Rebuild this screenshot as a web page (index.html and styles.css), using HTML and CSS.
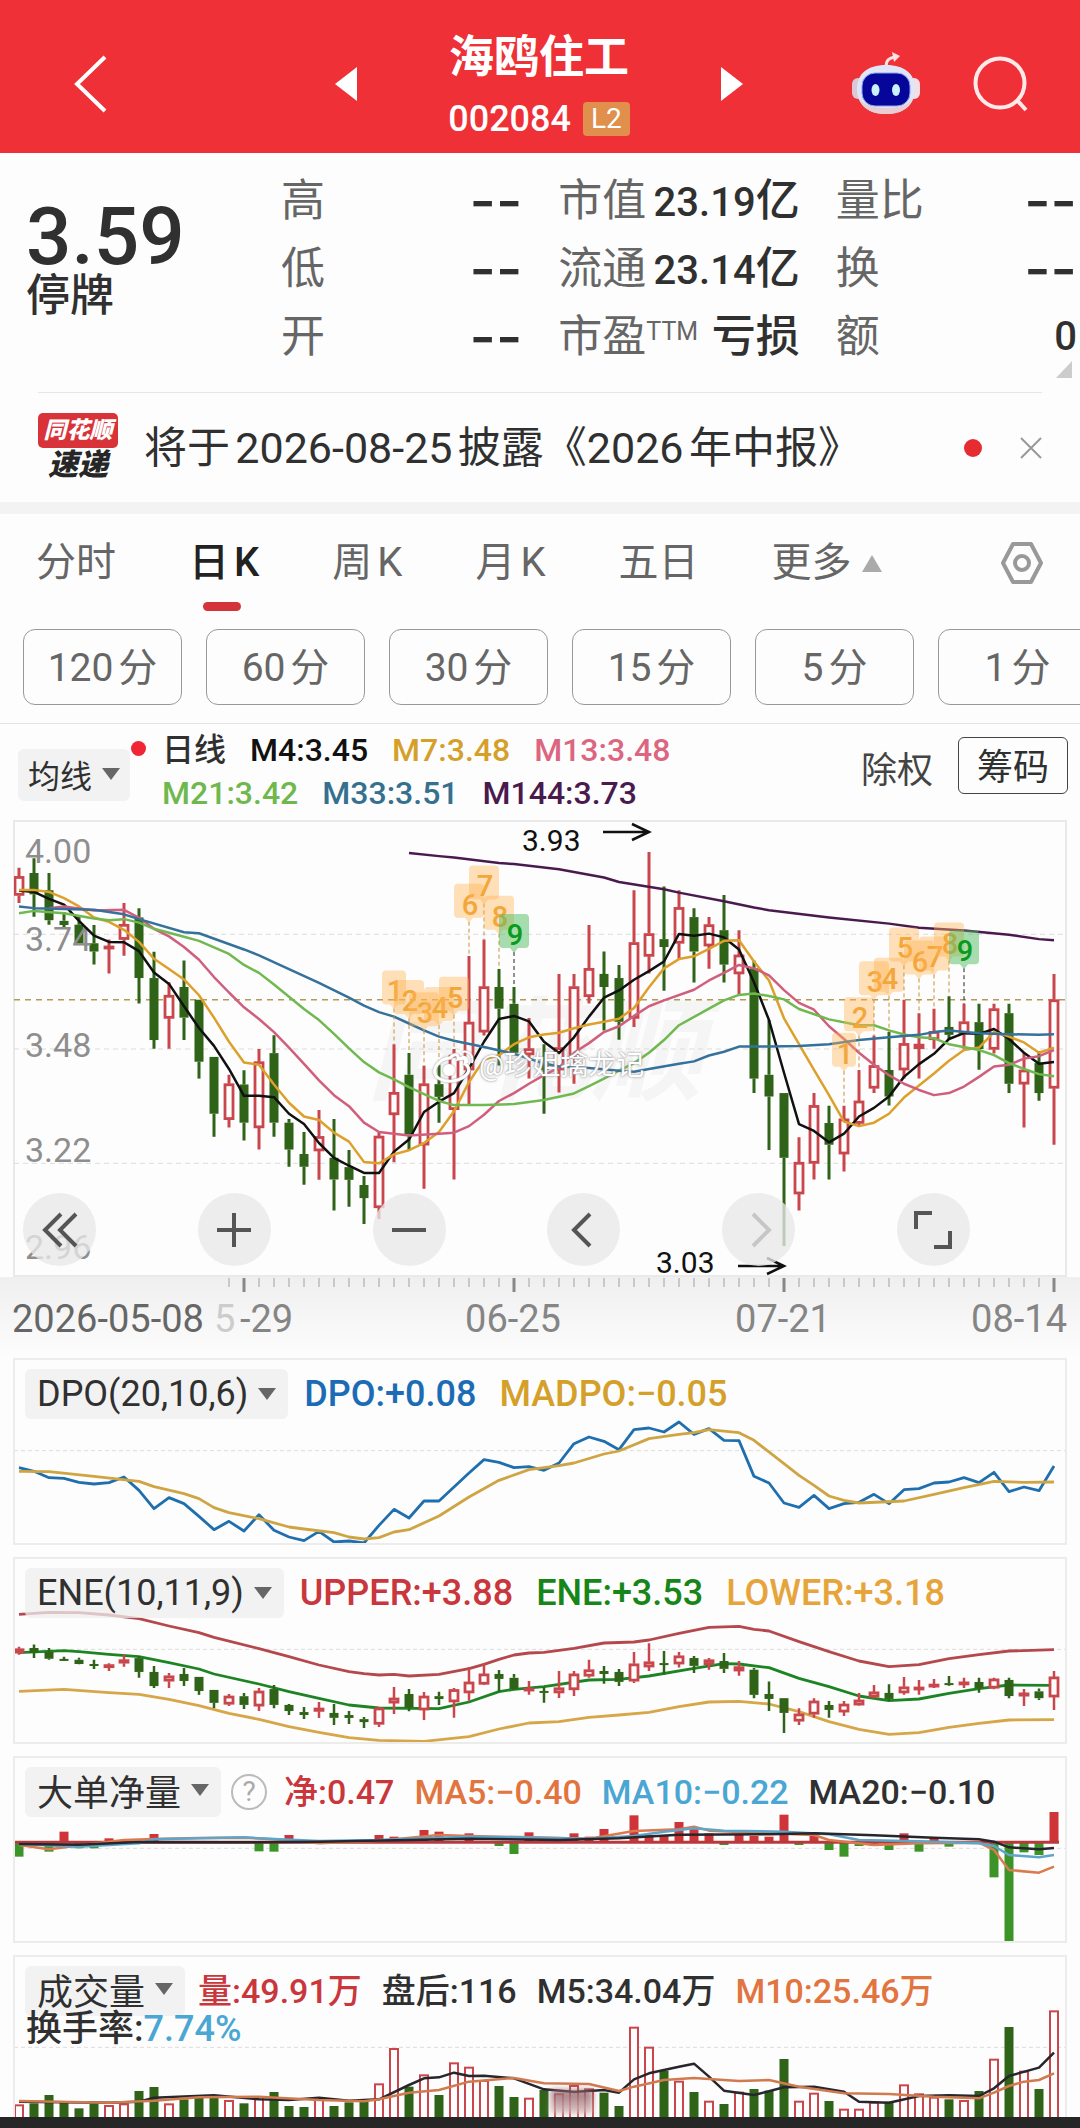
FILE: index.html
```html
<!DOCTYPE html>
<html lang="zh-CN">
<head>
<meta charset="utf-8">
<meta name="viewport" content="width=device-width, initial-scale=1">
<title>海鸥住工 002084</title>
<link rel="stylesheet" href="styles.css">
</head>
<body>
<header class="topbar">
  <div class="topbar-left">
    <button class="icon-btn" aria-label="返回"><svg width="36" height="60" viewBox="0 0 36 60"><path d="M32 3 4 30 32 57" fill="none" stroke="#fff" stroke-width="4"/></svg></button>
  </div>
  <div class="stock">
    <button class="icon-btn" aria-label="上一只"><svg width="22" height="34" viewBox="0 0 22 34"><path d="M22 0v34L0 17z" fill="#fff"/></svg></button>
    <div class="stock-name">
      <h1>海鸥住工</h1>
      <p>002084 <span class="level">L2</span></p>
    </div>
    <button class="icon-btn" aria-label="下一只"><svg width="22" height="34" viewBox="0 0 22 34"><path d="M0 0v34l22-17z" fill="#fff"/></svg></button>
  </div>
  <div class="topbar-right">
    <button class="icon-btn" aria-label="智能助手"><svg width="70" height="64" viewBox="0 0 70 64">
      <path d="M35 15c0-7 3-9 9-10" fill="none" stroke="#ffe3e3" stroke-width="3"/><path d="M41 0l8 4-6 6z" fill="#ffe3e3"/>
      <rect x="1" y="26" width="12" height="21" rx="6" fill="#d9c9d8"/><rect x="57" y="26" width="12" height="21" rx="6" fill="#f3dfe4"/>
      <path d="M35 13c19 0 29 9 29 24S54 62 35 62 6 52 6 37s10-24 29-24z" fill="#dfe6f8"/>
      <path d="M35 56c14 0 22-3 26-9-4 11-13 15-26 15S13 58 9 47c4 6 12 9 26 9z" fill="#e9cdd3"/>
      <rect x="11" y="21" width="48" height="33" rx="13" fill="#06079a" stroke="#8ea0f0" stroke-width="1"/>
      <ellipse cx="24.500" cy="38" rx="4" ry="6" fill="#c9f1ff"/><ellipse cx="45" cy="38" rx="4" ry="6" fill="#c9f1ff"/></svg></button>
    <button class="icon-btn" aria-label="搜索"><svg width="56" height="56" viewBox="0 0 56 56"><circle cx="27" cy="27" r="24.500" fill="none" stroke="#ffe9e9" stroke-width="4"/><path d="M44 44l9 10" stroke="#ffe9e9" stroke-width="4"/></svg></button>
  </div>
</header>

<main>
<section class="quote">
  <div class="price"><strong>3.59</strong><span>停牌</span></div>
  <dl>
    <div><dt>高</dt><dd class="empty">--</dd></div>
    <div><dt>低</dt><dd class="empty">--</dd></div>
    <div><dt>开</dt><dd class="empty">--</dd></div>
  </dl>
  <dl>
    <div><dt>市值</dt><dd>23.19<b>亿</b></dd></div>
    <div><dt>流通</dt><dd>23.14<b>亿</b></dd></div>
    <div><dt>市盈<sup>TTM</sup></dt><dd><b>亏损</b></dd></div>
  </dl>
  <dl>
    <div><dt>量比</dt><dd class="empty">--</dd></div>
    <div><dt>换</dt><dd class="empty">--</dd></div>
    <div><dt>额</dt><dd>0</dd></div>
  </dl>
  <span class="corner"></span>
</section>

<section class="news">
  <div class="news-logo"><span>同花顺</span><em>速递</em></div>
  <a class="news-text" href="#">将于2026-08-25披露《2026年中报》</a>
  <span class="dot"></span>
  <button class="icon-btn" aria-label="关闭"><svg width="22" height="26" viewBox="0 0 22 26"><path d="M1 3l20 20M21 3L1 23" stroke="#999" stroke-width="2"/></svg></button>
</section>

<nav class="tabs">
  <button>分时</button><button class="on">日K</button><button>周K</button><button>月K</button><button>五日</button><button>更多<i class="tri-up"></i></button>
  <button class="settings" aria-label="设置"><svg width="44" height="44" viewBox="0 0 44 44" fill="none" stroke="#999" stroke-width="4"><path d="M13 3h18l10 19-10 19H13L3 22z" stroke-linejoin="round"/><circle cx="22" cy="22" r="7"/></svg></button>
</nav>
<div class="minutes">
  <button>120分</button><button>60分</button><button>30分</button><button>15分</button><button>5分</button><button>1分</button>
</div>

<section class="legend">
  <button class="pick">均线<i class="tri-down"></i></button>
  <div class="legend-values">
    <p><span class="c-ink">日线</span><span class="c-black">M4:3.45</span><span class="c-gold">M7:3.48</span><span class="c-pink">M13:3.48</span></p>
    <p><span class="c-lime">M21:3.42</span><span class="c-steel">M33:3.51</span><span class="c-plum">M144:3.73</span></p>
  </div>
  <button class="plain">除权</button>
  <button class="chips">筹码</button>
</section>

<section class="kline">
  <svg class="plot" id="kline"></svg>
  <p class="credit"><svg width="42" height="34" viewBox="0 0 42 34"><path d="M17 9c3-4 9-5 8 1 6-2 9 0 7 5 5 3 5 8 0 12-6 5-17 7-25 3-6-3-7-9-3-14 3-4 8-7 13-7z" fill="none" stroke="#fff" stroke-width="3"/><circle cx="16" cy="21" r="6" fill="#fff"/><path d="M29 3c7-2 12 4 10 11M29 8c4-1 6 2 5 6" fill="none" stroke="#fff" stroke-width="2"/></svg>@珍姐擒龙记</p>
  <div class="controls">
    <button aria-label="最早"><svg width="36" height="36" viewBox="0 0 36 36"><path d="M19 2 3 18l16 16M34 2 18 18l16 16"/></svg></button>
    <button aria-label="放大"><svg width="36" height="36" viewBox="0 0 36 36"><path d="M1 18h34M18 1v34"/></svg></button>
    <button aria-label="缩小"><svg width="36" height="36" viewBox="0 0 36 36"><path d="M1 18h34"/></svg></button>
    <button aria-label="向左"><svg width="36" height="36" viewBox="0 0 36 36"><path d="M24 2 8 18l16 16"/></svg></button>
    <button aria-label="向右" class="off"><svg width="36" height="36" viewBox="0 0 36 36"><path d="M12 2l16 16-16 16"/></svg></button>
    <button aria-label="全屏"><svg width="38" height="38" viewBox="0 0 38 38"><path d="M2 18V2h16M36 20v16H20"/></svg></button>
  </div>
</section>
<svg class="axis" id="axis"></svg>

<section class="panel">
  <svg class="plot" id="dpo"></svg>
  <div class="panel-head"><button class="pick">DPO(20,10,6)<i class="tri-down"></i></button><span class="c-blue">DPO:+0.08</span><span class="c-gold">MADPO:−0.05</span></div>
</section>
<section class="panel">
  <svg class="plot" id="ene"></svg>
  <div class="panel-head"><button class="pick">ENE(10,11,9)<i class="tri-down"></i></button><span class="c-red">UPPER:+3.88</span><span class="c-green">ENE:+3.53</span><span class="c-amber">LOWER:+3.18</span></div>
</section>
<section class="panel">
  <svg class="plot" id="net"></svg>
  <div class="panel-head dense"><button class="pick">大单净量<i class="tri-down"></i></button><button class="help" aria-label="说明">?</button><span class="c-red">净:0.47</span><span class="c-orange">MA5:−0.40</span><span class="c-sky">MA10:−0.22</span><span class="c-ink">MA20:−0.10</span></div>
</section>
<section class="panel last">
  <svg class="plot" id="volume"></svg>
  <div class="panel-head dense"><button class="pick">成交量<i class="tri-down"></i></button><span class="c-red">量:49.91万</span><span class="c-ink">盘后:116</span><span class="c-ink">M5:34.04万</span><span class="c-orange">M10:25.46万</span></div>
  <p class="turnover">换手率:<span class="c-sky">7.74%</span></p>
  <span class="avatar"></span>
</section>
</main>
<footer class="bottom"></footer>
<script src="charts.js"></script>
</body>
</html>
```
FILE: styles.css
```css
* { box-sizing: border-box; margin: 0; padding: 0; }
body { background: #fdfdfd; color: #303030; font-family: Roboto, "Noto Sans CJK SC", sans-serif; font-size: 36px; overflow-x: hidden; }
button { font: inherit; color: inherit; background: none; border: 0; }
a { color: inherit; text-decoration: none; }
svg { display: block; }
.icon-btn { display: flex; flex: none; }

.c-ink { color: #303030; }
.c-black { color: #111; }
.c-gold { color: #d4a02a; }
.c-pink { color: #dc6580; }
.c-lime { color: #6fb84e; }
.c-steel { color: #35708f; }
.c-plum { color: #4a1a4e; }
.c-blue { color: #1c6cb5; }
.c-red { color: #c9363c; }
.c-green { color: #178517; }
.c-amber { color: #e6a43a; }
.c-orange { color: #e2743f; }
.c-sky { color: #4aa6d3; }

.topbar { display: grid; grid-template-columns: 1fr 408px 1fr; align-items: center; padding: 20px 51px 5px 73px; background: #ef3036; color: #fff; }
.topbar-left { display: flex; }
.stock { display: flex; align-items: center; justify-content: space-between; margin-left: -12px; margin-right: 12px; }
.stock-name { padding-top: 6px; text-align: center; }
.stock-name h1 { font-size: 45px; font-weight: 700; line-height: 64px; }
.stock-name p { display: flex; align-items: center; gap: 12px; font-size: 36px; font-weight: 500; line-height: 58px; }
.level { padding: 0 8px; border-radius: 4px; background: #e08f4c; font-size: 28px; font-weight: 400; line-height: 34px; }
.topbar-right { display: flex; align-items: center; justify-content: flex-end; gap: 52px; }

.quote { position: relative; display: grid; grid-template-columns: 219px 1fr 1fr 1fr; gap: 36px; padding: 14px 3px 21px 26px; font-size: 44px; line-height: 68px; }
.price { padding-top: 38px; }
.price strong { display: block; font-size: 80px; font-weight: 500; line-height: 64px; }
.price span { display: block; font-weight: 500; line-height: 54px; }
.quote dl > div { display: flex; justify-content: space-between; height: 68px; white-space: nowrap; }
.quote dt { color: #666; }
.quote dt sup { font-size: 25px; line-height: 1px; vertical-align: 12px; }
.quote dd { font-size: 40px; font-weight: 500; }
.quote dd b { font-size: 44px; font-weight: 500; }
.quote .empty { font-family: Inter, sans-serif; font-size: 57px; }
.corner { position: absolute; right: 8px; bottom: 14px; border-left: 16px solid transparent; border-bottom: 17px solid #ccc; }

.news { display: flex; align-items: center; height: 110px; margin: 0 38px; border-top: 1px solid #e6e6e6; font-size: 43px; }
.news-logo { width: 80px; margin-right: 26px; text-align: center; font-style: italic; font-weight: 900; }
.news-logo span { display: block; border-radius: 5px; background: #d9333a; color: #fff; font-size: 23px; line-height: 35px; }
.news-logo em { display: block; color: #262626; font-size: 30px; line-height: 34px; }
.news-text { flex: 1; padding-bottom: 8px; white-space: nowrap; text-autospace: normal; }
.dot { width: 18px; height: 18px; margin-right: 38px; border-radius: 50%; background: #e52d31; }

.tabs { display: flex; align-items: center; gap: 73px; padding: 19px 36px 36px; border-top: 12px solid #f3f3f3; color: #666; font-size: 40px; line-height: 60px; text-autospace: normal; }
.tabs button { position: relative; display: flex; align-items: center; white-space: nowrap; }
.tabs .on { color: #222; font-weight: 500; }
.tabs .on::after { content: ""; position: absolute; left: 14px; bottom: -18px; width: 38px; height: 9px; border-radius: 5px; background: #d5333a; }
.tri-up { margin-left: 10px; border: 10px solid transparent; border-top: 0; border-bottom: 17px solid #aaa; }
.tabs .settings { margin-left: auto; }

.minutes { display: grid; grid-auto-flow: column; grid-auto-columns: 159px; gap: 24px; padding: 0 0 18px 23px; overflow: hidden; border-bottom: 1px solid #e3e3e3; }
.minutes button { height: 76px; padding-bottom: 6px; border: 1px solid #999; border-radius: 12px; color: #666; font-size: 39px; text-autospace: normal; }

.legend { display: flex; align-items: center; height: 96px; padding: 0 12px 0 18px; font-size: 32px; }
.pick { display: flex; align-items: center; gap: 10px; height: 50px; padding: 0 11px 0 12px; border-radius: 6px; background: rgba(238, 238, 238, .75); white-space: nowrap; }
.tri-down { border: 9px solid transparent; border-bottom: 0; border-top: 12px solid #666; }
.legend .pick { position: relative; gap: 10px; height: 52px; padding: 0 10px 2px; margin-top: 6px; margin-right: 32px; }
.legend .pick::after { content: ""; position: absolute; right: -16px; top: -8px; width: 15px; height: 15px; border-radius: 50%; background: #f02535; }
.legend-values { flex: 1; font-weight: 500; }
.legend-values p { display: flex; gap: 24px; line-height: 43px; }
.plain { margin-right: 25px; margin-bottom: 10px; color: #444; font-size: 36px; }
.chips { height: 57px; margin-bottom: 14px; padding: 0 18px 4px; border: 1px solid #444; border-radius: 6px; font-size: 36px; }

.kline { position: relative; height: 457px; margin: 0 13px; border: 2px solid #e9e9e9; }
.plot { position: absolute; inset: -1px; width: calc(100% + 2px); height: calc(100% + 2px); }
.credit { position: absolute; left: 418px; top: 226px; display: flex; align-items: center; gap: 4px; color: #fff; font-size: 28px; line-height: 36px; text-shadow: 0 0 3px #999, 0 0 1px #999; }
.credit svg { filter: drop-shadow(0 0 1px #999); }
.controls { position: absolute; left: 8px; right: 95px; bottom: 9px; display: flex; justify-content: space-between; }
.controls button { display: grid; place-items: center; width: 73px; height: 73px; border-radius: 50%; background: rgba(232, 232, 232, .78); }
.controls path { fill: none; stroke: #555; stroke-width: 4; }
.controls .off path { stroke: #c6c6c6; }
.axis { width: 100%; height: 81px; padding: 0 13px; background: linear-gradient(#efefef, #fdfdfd); }

.panel { position: relative; height: 187px; margin: 0 13px 12px; border: 2px solid #ececec; background: #fdfdfd; overflow: hidden; }
.panel.last { height: 162px; margin-bottom: 0; border-bottom: 0; }
.panel-head { position: relative; display: flex; align-items: center; gap: 23px; padding: 9px 10px 0; white-space: nowrap; }
.panel-head .pick { padding: 0 12px; margin-right: -7px; }
.panel-head span { font-weight: 500; }
.dense { gap: 20px; }
.dense .pick { padding-bottom: 4px; }
.dense span { font-size: 34px; line-height: 46px; }
.help { width: 36px; height: 36px; margin: 0 -3px; border: 2px solid #bbb; border-radius: 50%; color: #aaa; font-size: 28px; line-height: 30px; }
.turnover { position: relative; padding-left: 11px; font-weight: 500; line-height: 26px; }
.avatar { position: absolute; left: 536px; bottom: 3px; width: 42px; height: 24px; background: linear-gradient(#8d5a62, #dcc3c4); filter: blur(3px); opacity: .85; }
.bottom { height: 12px; background: #262626; }

.price-mark { font-size: 30px; fill: #111; }
.scale { font-size: 34px; fill: #8e8e8e; }
.date { font-size: 38px; fill: #858585; }
.date-now { fill: #666; }
.date-faded { fill: #ccc; }
.brand { font-size: 112px; font-weight: 700; font-style: italic; fill: #f5f5f5; }
.count { font-size: 29px; font-weight: 500; text-anchor: middle; }
```
FILE: charts.js
```js
const NS = 'http://www.w3.org/2000/svg';
const RED = '#c9474c', GREEN = '#2f6318';

// One entry per trading day: direction, high, body top, body bottom, low.
const days = `r168,193,248,270 g140,183,245,310 g183,233,320,333 g296,322,334,345 g308,333,387,390
g334,387,411,449 r376,395,400,475 r270,332,376,423 g285,312,488,562 g412,488,668,693
r500,538,605,693 g437,514,603,668 g551,551,731,780 g717,717,882,949 r769,795,899,922
g756,797,908,960 r694,731,923,986 g654,706,908,949 g897,908,986,1036 g935,999,1036,1088
r871,948,990,1074 g897,1010,1073,1163 g987,1037,1074,1152 g1063,1089,1127,1202 r935,947,1155,1188
r680,820,885,1023 g706,769,942,990 r743,795,973,1100 g740,796,833,908 r694,712,870,1073
r424,616,755,855 r376,513,645,655 g462,514,577,742 g514,563,705,712 r604,693,711,780
g680,730,755,882 r476,690,755,820 r476,513,715,795 r334,460,542,562 g411,476,514,640
g450,488,615,667 r233,385,605,630 r122,359,425,475 g222,375,398,525 r233,283,387,432
g285,311,411,501 r311,333,395,461 g247,349,449,501 r349,421,476,535 g437,460,780,822
g610,769,832,987 g822,822,1010,1266 r950,1023,1115,1163 r822,858,1026,1073 g859,909,972,1073
r859,897,999,1050 r755,845,910,915 r655,742,808,822 g645,755,832,858 r551,678,755,780
r590,680,693,780 r577,643,667,693 g541,630,653,665 r563,615,650,693 g563,616,694,754
r563,577,695,707 g563,590,795,822 r706,755,796,922 g700,735,822,844 r476,551,808,972`
  .split(/\s+/).map(s => [s[0] === 'r', ...s.slice(1).split(',').map(Number)]);

// Series are written as day:value pairs.
const averages = {
  '#4a1a4e': '26:125 28:134 29:138 32:154 33:157 36:172 39:196 40:209 43:230 44:240 47:265 49:283 50:291 54:312 58:330 60:342 63:350 66:362 68:375 69:378',
  '#111': '0:234 1:238 2:258 3:275 4:322 5:365 6:383 7:384 8:410 9:472 10:505 11:570 12:633 13:685 14:752 15:830 16:830 17:834 18:882 19:912 20:967 21:1010 22:1033 23:1054 24:1054 25:992 26:957 27:877 28:847 29:822 30:750 31:673 32:607 33:598 34:614 35:673 36:706 37:660 38:600 39:545 40:524 41:493 42:468 43:440 44:360 45:365 46:359 47:370 48:405 49:500 50:610 51:763 52:912 53:932 54:965 55:940 56:890 57:865 58:832 59:775 60:738 61:708 62:665 63:648 64:650 65:636 66:665 67:705 68:737 69:732',
  '#dda02b': '0:232 1:232 2:238 3:256 4:280 5:312 6:325 7:348 8:383 9:432 10:462 11:492 12:538 13:603 14:673 15:733 16:740 17:797 18:850 19:890 20:900 21:937 22:963 23:1022 24:1026 25:1000 26:988 27:967 28:935 29:875 30:790 31:725 32:712 33:680 34:660 35:652 36:647 37:634 38:623 39:615 40:606 41:575 42:515 43:460 44:433 45:425 46:403 47:380 48:378 49:440 50:495 51:605 52:680 53:755 54:828 55:905 56:918 57:908 58:882 59:835 60:800 61:765 62:728 63:697 64:690 65:645 66:658 67:675 68:705 69:690',
  '#d05f7d': '2:285 3:280 5:292 7:290 8:313 9:345 10:367 11:398 12:435 13:485 14:530 15:573 16:607 17:645 18:690 19:737 20:785 21:828 22:860 23:908 24:935 26:945 28:940 29:937 30:918 31:885 32:845 33:822 34:795 35:770 36:748 37:705 38:677 39:645 40:628 41:598 42:570 43:553 45:522 46:495 47:473 48:450 49:460 50:480 51:523 52:560 53:580 54:628 55:665 56:705 57:740 58:770 59:795 60:813 61:828 62:822 63:803 64:775 65:745 66:740 67:722 68:715 69:697',
  '#70b84f': '0:300 1:293 3:300 5:315 6:320 7:317 8:327 9:345 11:368 12:380 14:418 15:450 16:473 17:507 19:578 20:610 21:650 22:692 23:732 24:762 25:782 26:805 27:825 28:845 29:857 31:857 33:854 35:842 37:823 38:802 39:780 40:757 41:735 42:705 43:668 44:625 46:577 47:553 48:537 49:533 50:540 51:550 52:578 54:608 56:625 57:625 58:640 59:652 60:660 61:663 62:680 64:697 65:712 66:735 67:752 68:767 69:773',
  '#35719a': '0:280 1:285 5:290 7:303 8:317 11:355 12:358 15:405 16:422 18:462 20:502 22:545 23:568 24:587 25:600 26:620 27:640 28:658 29:670 31:688 33:708 34:722 35:736 36:745 38:749 40:757 41:760 42:752 44:737 45:730 46:713 47:702 48:687 50:687 52:685 54:680 56:668 58:660 60:653 61:645 62:640 64:648 66:651 68:653 69:651'
};
// Nine-turn counts: day, digit, height of the digit.
const counts = [[25, 1, 527], [26, 2, 555], [27, 3, 590], [28, 4, 575], [29, 5, 545], [30, 6, 275], [31, 7, 222], [32, 8, 310], [33, 9, 363],
  [55, 1, 708], [56, 2, 605], [57, 3, 500], [58, 4, 490], [59, 5, 402], [60, 6, 440], [61, 7, 428], [62, 8, 388], [63, 9, 410]];
const dpo = {
  '#1f6fae': '0:352 1:363 2:382 3:384 4:396 5:401 6:397 7:380 8:420 9:475 10:442 11:460 12:498 13:538 14:513 15:542 16:493 17:540 18:560 19:571 20:543 21:575 22:572 23:578 24:525 25:477 26:503 27:452 28:452 29:410 30:368 31:328 32:336 33:352 34:349 35:360 36:338 37:280 38:260 39:273 40:298 41:238 42:233 43:245 44:215 45:252 46:235 47:270 48:271 49:378 50:398 51:458 52:471 53:435 54:475 55:460 56:456 57:432 58:460 59:418 60:415 61:398 62:395 63:382 64:397 65:366 66:424 67:410 68:421 69:347',
  '#cfa544': '0:363 2:364 5:378 8:393 9:409 11:430 12:445 13:472 14:487 16:505 18:530 19:536 21:547 22:560 23:566 24:562 25:545 26:538 28:497 30:440 32:390 34:358 36:346 37:338 39:311 40:302 42:265 44:252 45:247 46:238 48:247 49:270 51:340 52:375 53:405 54:437 55:450 56:458 59:452 61:432 63:412 65:393 67:396 69:395'
};
const ene = {
  '#b5484c': '0:793 2:787 4:788 6:795 8:806 10:828 12:848 13:862 16:896 17:908 18:920 20:945 22:965 23:971 24:975 25:973 26:978 28:973 30:956 31:943 32:928 33:915 34:909 35:907 37:895 39:879 41:876 42:870 44:850 46:832 48:829 49:838 50:843 52:875 54:905 56:933 58:950 60:944 62:926 64:914 66:903 69:899',
  '#1d8424': '0:908 3:902 4:905 6:913 8:920 10:938 12:957 13:972 16:1002 18:1025 20:1045 22:1065 24:1074 28:1076 30:1056 32:1025 33:1018 35:1010 38:990 40:988 42:978 45:955 47:941 48:942 50:953 52:985 54:1010 56:1038 58:1052 60:1047 62:1030 64:1016 66:1005 69:1006',
  '#d6a649': '0:1024 3:1018 6:1028 8:1033 10:1048 12:1067 14:1090 16:1108 18:1130 20:1147 22:1163 24:1171 27:1174 30:1160 32:1137 34:1119 36:1115 38:1102 40:1095 42:1087 44:1070 46:1056 48:1054 50:1062 52:1085 54:1115 56:1138 58:1153 60:1148 62:1132 64:1120 66:1110 69:1109'
};
const netBars = '0:350 2:335 3:275 4:325 5:325 6:295 9:282 16:334 17:335 18:285 20:312 24:285 25:290 27:270 28:275 30:280 32:318 33:342 34:277 37:280 38:290 39:267 41:226 42:285 43:288 44:246 45:262 46:280 47:315 48:285 49:288 50:290 51:224 52:315 53:277 54:330 55:350 56:318 57:318 58:330 59:280 60:335 61:292 62:320 65:412 66:603 67:337 68:345 69:216';
const net = {
  '#d97b4e': '0:315 2:328 6:305 7:300 9:297 12:294 15:293 17:298 20:310 24:302 28:285 30:288 34:292 38:296 41:273 44:268 45:260 46:272 50:280 53:285 54:300 57:315 60:310 64:308 65:330 66:390 68:398 69:380',
  '#5ea5c9': '0:312 4:320 8:310 9:298 15:292 17:297 20:303 24:300 26:296 30:290 33:292 38:296 41:288 43:275 45:265 47:272 51:275 54:283 56:300 60:304 64:310 65:318 66:345 68:352 69:345',
  '#26262c': '0:312 4:314 8:306 14:307 20:305 26:300 30:296 36:300 40:295 44:284 50:283 53:280 57:286 61:293 64:298 65:305 66:322 68:328 69:324'
};
const volumes = [1093, 1090, 1065, 1085, 1105, 1092, 1095, 1090, 1053, 1041, 1090, 1078, 1072, 1068, 1080, 1090, 1068, 1056, 1098, 1101, 1072, 1098, 1087, 1085, 1030, 924, 1040, 1003, 1065, 967, 980, 1020, 1038, 1071, 1073, 1050, 1060, 1035, 1045, 1058, 1098, 860, 920, 992, 1022, 1056, 1082, 1092, 1055, 1047, 1052, 957, 1082, 1058, 1083, 1106, 1106, 1085, 1085, 1033, 1060, 1070, 1078, 1080, 1053, 956, 861, 992, 1047, 811];
const volumeLines = {
  '#26262c': '0:1085 6:1088 8:1085 9:1073 13:1066 16:1078 18:1080 20:1073 22:1082 24:1078 26:1035 27:1015 28:1012 29:998 30:1008 31:1007 33:1015 35:1048 37:1056 39:1050 40:1058 41:1018 42:1000 44:980 45:971 46:1010 47:1052 49:1065 51:1042 53:1040 55:1055 56:1085 58:1088 60:1068 62:1066 64:1068 65:1045 66:1008 68:983 69:938',
  '#d07a50': '0:1083 6:1088 9:1082 12:1072 16:1070 20:1080 23:1084 24:1078 26:1058 28:1050 30:1025 33:1014 35:1030 38:1032 40:1053 41:1040 43:1020 45:1014 48:1023 50:1020 52:1040 55:1060 58:1062 61:1070 64:1075 65:1058 66:1038 67:1025 68:1020 69:1000'
};

const main = document.querySelector('main');
const pairs = s => s.split(' ').map(p => p.split(':').map(Number));
const step = () => (main.clientWidth - 45) / 69;
const x = i => 5 + i * step();

function add(svg, tag, attrs, text) {
  const el = document.createElementNS(NS, tag);
  for (const k in attrs) el.setAttribute(k, attrs[k]);
  if (text !== undefined) el.textContent = text;
  svg.append(el);
}
function dash(svg, y, color, width, pattern) {
  add(svg, 'line', { x1: 0, x2: main.clientWidth - 28, y1: y, y2: y, stroke: color, 'stroke-width': width, 'stroke-dasharray': pattern });
}
function lines(svg, set, y, width) {
  for (const color in set)
    add(svg, 'polyline', { points: pairs(set[color]).map(([i, v]) => x(i) + ',' + y(v)).join(' '), fill: 'none', stroke: color, 'stroke-width': width, 'stroke-linejoin': 'round' });
}
function candles(svg, y, wick) {
  days.forEach(([up, high, top, bottom, low], i) => {
    const color = up ? RED : GREEN, t = y(top), b = y(bottom);
    add(svg, 'path', { d: `M${x(i)} ${y(high)}V${t}M${x(i)} ${b}V${y(low)}`, stroke: color, 'stroke-width': wick });
    if (up) add(svg, 'rect', { x: x(i) - 4, y: t + 1, width: 8, height: Math.max(b - t - 2, 1), fill: '#fdfdfd', stroke: color, 'stroke-width': 2.8 });
    else add(svg, 'rect', { x: x(i) - 4.5, y: t, width: 9, height: Math.max(b - t, 2), fill: color });
  });
}
function arrow(svg, x2, y) {
  add(svg, 'path', { d: `M${x2 - 46} ${y}H${x2}M${x2 - 17} ${y - 8}L${x2} ${y}L${x2 - 17} ${y + 8}`, fill: 'none', stroke: '#111', 'stroke-width': 2.5 });
}

function draw() {
  const svg = id => { const el = document.getElementById(id); el.replaceChildren(); return el; };
  const k = svg('kline'), y = v => (v - 32) / 2.9037;
  add(k, 'text', { x: 353, y: 270, class: 'brand' }, '同花顺');
  [361, 694, 1026].forEach(v => dash(k, y(v), '#ddd', 1, '5 4'));
  dash(k, y(551), '#b39a55', 1.5, '6 5');
  candles(k, y, 3);
  ['4.00', '3.74', '3.48', '3.22', '2.96'].forEach((t, n) => add(k, 'text', { x: 11, y: [42, 130, 236, 341, 438][n], class: 'scale' }, t));
  lines(k, averages, y, 2.5);
  counts.forEach(([i, digit, v]) => {
    const green = digit === 9, cx = x(i), top = y(v) - 21, w = digit === 1 ? 12 : 15;
    add(k, 'line', { x1: cx, x2: cx, y1: top + 38, y2: y(days[i][1]), stroke: green ? '#222' : '#c98f3a', 'stroke-width': 1, 'stroke-dasharray': '4 3' });
    add(k, 'path', { d: `M${cx - w + 4} ${top}H${cx + w - 4}q4 0 4 4V${top + 30}q0 4 -4 4H${cx + 4}l-4 5l-4 -5H${cx - w + 4}q-4 0 -4 -4V${top + 4}q0 -4 4 -4z`, fill: green ? '#4fbb5f' : '#ffb455', 'fill-opacity': green ? .5 : .42 });
    add(k, 'text', { x: cx + 1, y: y(v) + 10, class: 'count', fill: green ? '#0a9a1c' : '#f3a63a' }, digit);
  });
  add(k, 'text', { x: x(42) - 127, y: 30, class: 'price-mark' }, '3.93');
  arrow(k, x(42), 11);
  add(k, 'text', { x: x(51) - 128, y: 452, class: 'price-mark' }, '3.03');
  arrow(k, x(51), 445);

  const a = svg('axis');
  for (let i = 14; i < 70; i++) {
    const major = (i - 15) % 18 === 0;
    add(a, 'line', { x1: x(i) + 1, x2: x(i) + 1, y1: 1, y2: major ? 15 : 10, stroke: major ? '#888' : '#bbb', 'stroke-width': major ? 3 : 1.5 });
  }
  add(a, 'text', { x: -1, y: 55, class: 'date date-now' }, '2026-05-08');
  add(a, 'text', { x: x(15) - 29, y: 55, class: 'date date-faded' }, '5');
  add(a, 'text', { x: x(15) - 3, y: 55, class: 'date' }, '-29');
  add(a, 'text', { x: x(33), y: 55, class: 'date', 'text-anchor': 'middle' }, '06-25');
  add(a, 'text', { x: x(51), y: 55, class: 'date', 'text-anchor': 'middle' }, '07-21');
  add(a, 'text', { x: main.clientWidth - 26, y: 55, class: 'date', 'text-anchor': 'end' }, '08-14');

  const d = svg('dpo'), dy = v => (v - 26) / 3;
  dash(d, dy(301), '#ddd', 1, '4 3');
  lines(d, dpo, dy, 2.8);

  const e = svg('ene'), ey = v => (v - 624) / 3;
  dash(e, ey(898), '#ddd', 1, '4 3');
  lines(e, ene, ey, 2.8);
  candles(e, v => 113 + (v - 476) * 0.0785, 2.5);

  const n = svg('net'), ny = v => (v - 51) / 3;
  dash(n, ny(325), '#ddd', 1, '4 3');
  pairs(netBars).forEach(([i, v]) => add(n, 'rect', { x: x(i) - 4.5, y: ny(Math.min(v, 307)), width: 9, height: Math.abs(v - 307) / 3, fill: v < 307 ? '#cf3438' : '#3c9428' }));
  add(n, 'line', { x1: 0, x2: main.clientWidth - 35, y1: ny(307), y2: ny(307), stroke: '#b8393c', 'stroke-width': 3 });
  lines(n, net, ny, 2.5);

  const v = svg('volume'), vy = t => (t - 648) / 3;
  dash(v, vy(922), '#ddd', 1, '4 3');
  volumes.forEach((t, i) => {
    const up = days[i][0];
    add(v, 'rect', up ? { x: x(i) - 4, y: vy(t) + 1, width: 8, height: 190, fill: '#fdfdfd', stroke: RED, 'stroke-width': 2 }
      : { x: x(i) - 4.5, y: vy(t), width: 9, height: 190, fill: GREEN });
  });
  lines(v, volumeLines, vy, 2.5);
}
draw();
addEventListener('resize', draw);
```
